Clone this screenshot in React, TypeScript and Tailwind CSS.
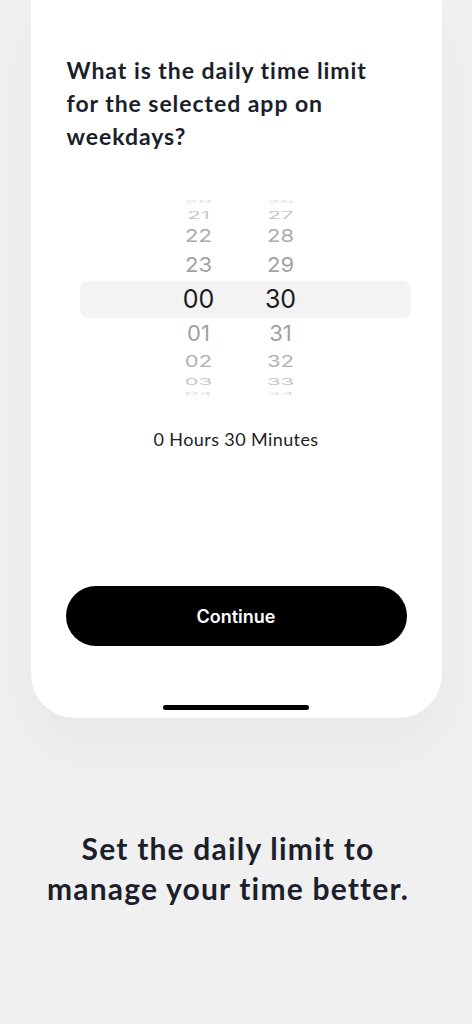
import React from 'react';

type WheelRow = {
  h: string;
  m: string;
  height: string;
  scale: string;
  color: string;
};

const rows: WheelRow[] = [
  { h: '20', m: '26', height: 'h-[8px]', scale: 'scale-y-[0.18]', color: 'text-[#dcdcdc]' },
  { h: '21', m: '27', height: 'h-[17px]', scale: 'scale-y-[0.45]', color: 'text-[#c6c6c6]' },
  { h: '22', m: '28', height: 'h-[26px]', scale: 'scale-y-[0.8]', color: 'text-[#ababab]' },
  { h: '23', m: '29', height: 'h-[32px]', scale: 'scale-y-[0.92]', color: 'text-[#a2a2a2]' },
];

const rowsBelow: WheelRow[] = [
  { h: '01', m: '31', height: 'h-[30px]', scale: 'scale-y-[0.97]', color: 'text-[#a0a0a0]' },
  { h: '02', m: '32', height: 'h-[25px]', scale: 'scale-y-[0.75]', color: 'text-[#b0b0b0]' },
  { h: '03', m: '33', height: 'h-[17px]', scale: 'scale-y-[0.38]', color: 'text-[#c6c6c6]' },
  { h: '04', m: '34', height: 'h-[8px]', scale: 'scale-y-[0.15]', color: 'text-[#dcdcdc]' },
];

const Row = ({ r }: { r: WheelRow }) => (
  <div className={`flex items-center pl-[138px] gap-[22px] ${r.height} overflow-visible`}>
    <span className={`w-[60px] text-center text-[22px] leading-none ${r.scale} ${r.color}`}>{r.h}</span>
    <span className={`w-[60px] text-center text-[22px] leading-none ${r.scale} ${r.color}`}>{r.m}</span>
  </div>
);

const App = () => {
  return (
    <div className="min-h-[1024px] w-[472px] bg-[#f0f0f0] flex flex-col items-center font-['Lato',sans-serif]">
      <div className="w-[411px] h-[718px] bg-white rounded-b-[44px] shadow-[0_30px_60px_rgba(0,0,0,0.035)] flex flex-col">
        <h1 className="mt-[54px] px-[36px] text-[23px] leading-[33px] font-bold text-[#1b1f2c] tracking-[0.95px]">
          What is the daily time limit<br />for the selected app on<br />weekdays?
        </h1>

        <div className="mt-[45px] flex flex-col font-['Inter',sans-serif]">
          {rows.map((r) => (
            <Row key={r.h} r={r} />
          ))}
          <div className="ml-[49px] w-[331px] h-[37px] rounded-[8px] bg-[#f3f3f3] flex items-center pl-[89px] gap-[22px]">
            <span className="w-[60px] text-center text-[25px] leading-none text-[#1c1c1c]">00</span>
            <span className="w-[60px] text-center text-[25px] leading-none text-[#1c1c1c]">30</span>
          </div>
          {rowsBelow.map((r) => (
            <Row key={r.h} r={r} />
          ))}
        </div>

        <p className="mt-[29px] text-center text-[18px] leading-[24px] tracking-[0.4px] text-[#222]">0 Hours 30 Minutes</p>

        <button className="mt-[135px] mx-[35px] h-[60px] rounded-full bg-black text-white text-[18px] font-semibold font-['Inter',sans-serif]">
          Continue
        </button>

        <div className="mt-auto mb-[8px] mx-auto w-[146px] h-[5px] rounded-full bg-black" />
      </div>

      <h2 className="mt-[110px] pr-[16px] text-center text-[30px] leading-[40px] font-bold tracking-[1.2px] text-[#1b1f2c]">
        Set the daily limit to<br />manage your time better.
      </h2>
    </div>
  );
};

export default App;
